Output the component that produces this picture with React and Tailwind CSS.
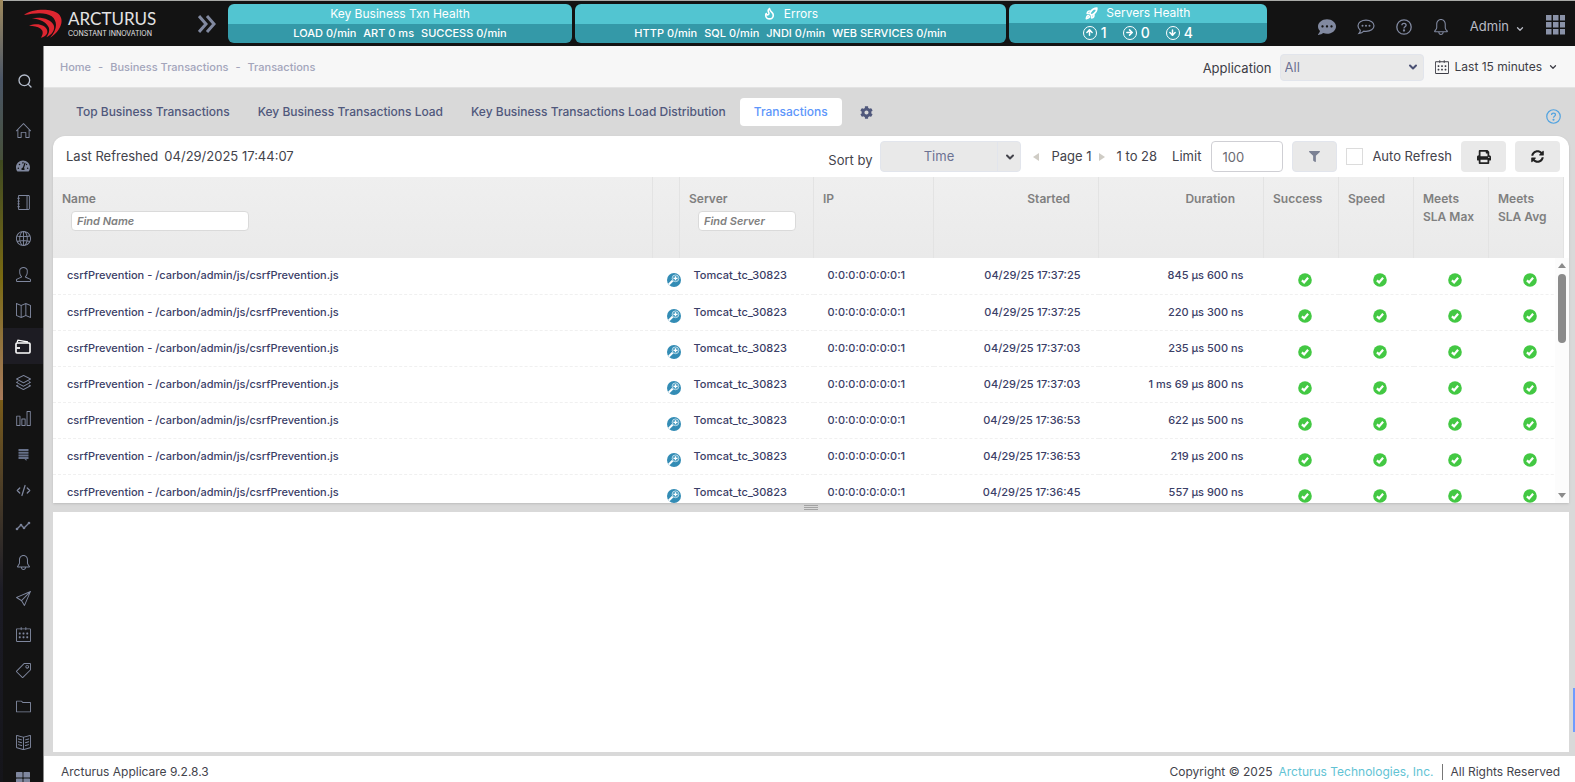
import React, { useState } from "react";
import {
  SlBell,
  SlBookOpen,
  SlCalender,
  SlChart,
  SlFolder,
  SlGlobe,
  SlHome,
  SlLayers,
  SlMap,
  SlNotebook,
  SlPaperPlane,
  SlTag,
  SlUser,
} from "react-icons/sl";
import {
  FaCog,
  FaCommentDots,
  FaFilter,
  FaPrint,
  FaSyncAlt,
  FaTachometerAlt,
  FaThLarge,
} from "react-icons/fa";
import {
  ArrowDown,
  ArrowRight,
  ArrowUp,
  ChevronDown,
  CodeXml,
  Flame,
  Rocket,
  Search,
} from "lucide-react";

const Swoosh = () => (
  <svg width="40" height="30" viewBox="66 24 120 90" fill="#dd2630">
    <path d="M69 42C90 24 150 20 172 38c20 18 8 52-25 72 23-24 23-50 5-64-18-14-52-10-83-4z" />
    <path d="M92 52c28-6 58 2 66 20 6 14-6 30-22 37 10-15 12-27 2-38-10-12-28-17-46-19z" />
    <path d="M84 74c26-10 48-2 54 12 4 12-4 20-18 24 7-12 7-20-1-27-10-7-21-9-35-9z" />
  </svg>
);

const WalletIcon = () => (
  <svg width="16" height="15" viewBox="0 0 16 15" fill="none" stroke="#fff">
    <rect x="1" y="4" width="14" height="10" rx="1" strokeWidth="1.600" />
    <path d="M2 3.500L3 1.200 13 3" strokeWidth="1.300" />
    <path d="M1.500 9H5" strokeWidth="1.800" />
  </svg>
);

const ServerIcon = () => (
  <svg width="13" height="13" viewBox="0 0 13 13" fill="#667089">
    <path d="M1.500 1h10v2h-10zM1.500 3.700h10v2h-10zM1.500 6.400h10v2h-10zM1.500 9.100h10v2H9.500V13l-2-1.900h-6z" />
  </svg>
);

const TrendIcon = () => (
  <svg width="16" height="12" viewBox="0 0 16 12" fill="none" stroke="#7a8299" strokeWidth="1.300">
    <path d="M2 9l4-4 3 3 5-5" />
    <g fill="#7a8299" stroke="none">
      <circle cx="2" cy="9" r="1.300" />
      <circle cx="6" cy="5" r="1.300" />
      <circle cx="9" cy="8" r="1.300" />
      <circle cx="14" cy="3" r="1.300" />
    </g>
  </svg>
);

const ChatOutline = () => (
  <svg width="18" height="16" viewBox="0 0 18 16" fill="none" stroke="currentColor" strokeWidth="1.200">
    <path d="M9 1.200c4.500 0 8 2.400 8 5.600s-3.500 5.600-8 5.600c-.8 0-1.500 0-2.200-.2C5.500 13.600 4 14.300 2 14.500c.8-.9 1.300-2 1.300-3.300C1.900 10.100 1 8.500 1 6.800c0-3.200 3.500-5.600 8-5.600z" />
    <g fill="currentColor" stroke="none">
      <circle cx="5.500" cy="6.800" r="1" />
      <circle cx="9" cy="6.800" r="1" />
      <circle cx="12.500" cy="6.800" r="1" />
    </g>
  </svg>
);

const HelpCircle = ({ size = 16 }) => (
  <svg width={size} height={size} viewBox="0 0 16 16" fill="none" stroke="currentColor" strokeWidth="1.300">
    <circle cx="8" cy="8" r="7.200" />
    <path d="M5.900 6.300c0-1.200.9-2 2.100-2s2.100.8 2.100 1.900c0 1.500-2.100 1.600-2.100 3.200" />
    <circle cx="8" cy="11.500" r=".5" fill="currentColor" />
  </svg>
);

const GridIcon = () => (
  <svg width="19" height="20" viewBox="0 0 19 20" fill="#8a92a8">
    {[0, 7, 14].map((y) => [0, 7, 14].map((x) => <rect key={`${x}-${y}`} x={x} y={y} width="5.500" height="5.500" />))}
  </svg>
);

const InspectIcon = () => (
  <svg width="14" height="14" viewBox="0 0 14 14">
    <circle cx="7" cy="7" r="7" fill="#338cb5" />
    <path d="M1.800 11.500l4-4" stroke="#fff" strokeWidth="2" />
    <circle cx="8.500" cy="5.300" r="3.400" fill="#4f9fc3" stroke="#cfe6f0" strokeWidth=".8" />
    <path d="M6.500 5.300h4M8.500 3.300v4" stroke="#fff" strokeWidth="1.200" />
  </svg>
);

const menu = [
  { name: "Home", icon: <SlHome size={15} /> },
  { name: "Dashboards", icon: <FaTachometerAlt size={14} /> },
  { name: "Notebook", icon: <SlNotebook size={15} /> },
  { name: "Web", icon: <SlGlobe size={15} /> },
  { name: "Users", icon: <SlUser size={15} /> },
  { name: "Map", icon: <SlMap size={15} /> },
  { name: "Business Transactions", icon: <WalletIcon />, active: true },
  { name: "Layers", icon: <SlLayers size={15} /> },
  { name: "Charts", icon: <SlChart size={15} /> },
  { name: "Servers", icon: <ServerIcon /> },
  { name: "Code", icon: <CodeXml size={15} strokeWidth={2} /> },
  { name: "Trends", icon: <TrendIcon /> },
  { name: "Alerts", icon: <SlBell size={15} /> },
  { name: "Messages", icon: <SlPaperPlane size={15} /> },
  { name: "Calendar", icon: <SlCalender size={15} /> },
  { name: "Tags", icon: <SlTag size={15} /> },
  { name: "Files", icon: <SlFolder size={15} /> },
  { name: "Documentation", icon: <SlBookOpen size={15} /> },
  { name: "Apps", icon: <FaThLarge size={14} /> },
];

const tabs = [
  "Top Business Transactions",
  "Key Business Transactions Load",
  "Key Business Transactions Load Distribution",
  "Transactions",
];

const rows = [
  { started: "04/29/25 17:37:25", duration: "845 μs 600 ns" },
  { started: "04/29/25 17:37:25", duration: "220 μs 300 ns" },
  { started: "04/29/25 17:37:03", duration: "235 μs 500 ns" },
  { started: "04/29/25 17:37:03", duration: "1 ms 69 μs 800 ns" },
  { started: "04/29/25 17:36:53", duration: "622 μs 500 ns" },
  { started: "04/29/25 17:36:53", duration: "219 μs 200 ns" },
  { started: "04/29/25 17:36:45", duration: "557 μs 900 ns" },
];

const HealthCard = ({ title, icon, className, children }) => (
  <section className={`flex h-[39px] min-w-0 flex-col overflow-hidden rounded-md text-white ${className}`}>
    <h2 className="flex h-5 items-center justify-center gap-2 bg-[#52c5d1] text-xs">
      {icon}
      {title}
    </h2>
    <div className="flex flex-1 items-center justify-center gap-[7px] whitespace-nowrap bg-[#3499a8] text-[11px] font-medium">
      {children}
    </div>
  </section>
);

const ServerCount = ({ icon, count }) => (
  <span className="flex items-center gap-1 text-sm">
    <span className="flex size-[14px] items-center justify-center rounded-full border border-white">{icon}</span>
    {count}
  </span>
);

const TopBar = () => (
  <header className="flex h-[46px] shrink-0 items-center border-t border-[#a9aaa7] bg-[#131313] text-[#8189a0]">
    <a href="#home" className="ml-5 flex w-[175px] items-center gap-[5px] text-[#e3e3e3]">
      <Swoosh />
      <span className="flex flex-col">
        <span className="font-[Lato,sans-serif] text-[17px] leading-5">ARCTURUS</span>
        <span className="text-[7px] leading-[10px]">CONSTANT INNOVATION</span>
      </span>
    </a>
    <button aria-label="Expand menu" className="mr-3">
      <svg width="18" height="18" viewBox="0 0 18 18" fill="none" stroke="currentColor" strokeWidth="3">
        <path d="M1 1l7 8-7 8M9 1l7 8-7 8" />
      </svg>
    </button>
    <div className="flex min-w-0 flex-1 gap-[3px] pb-px">
      <HealthCard title="Key Business Txn Health" className="grow-[344] basis-0">
        <span>LOAD 0/min</span>
        <span>ART 0 ms</span>
        <span>SUCCESS 0/min</span>
      </HealthCard>
      <HealthCard title="Errors" icon={<Flame size={13} strokeWidth={3} />} className="grow-[431] basis-0">
        <span>HTTP 0/min</span>
        <span>SQL 0/min</span>
        <span>JNDI 0/min</span>
        <span>WEB SERVICES 0/min</span>
      </HealthCard>
      <HealthCard title="Servers Health" icon={<Rocket size={13} strokeWidth={3} />} className="grow-[258] basis-0">
        <div className="flex gap-4">
          <ServerCount icon={<ArrowUp size={9} strokeWidth={4} />} count={1} />
          <ServerCount icon={<ArrowRight size={9} strokeWidth={4} />} count={0} />
          <ServerCount icon={<ArrowDown size={9} strokeWidth={4} />} count={4} />
        </div>
      </HealthCard>
    </div>
    <div className="ml-[51px] flex items-center gap-[21px] pt-[6px]">
      <button aria-label="Chat"><FaCommentDots size={18} /></button>
      <button aria-label="Feedback"><ChatOutline /></button>
      <button aria-label="Help"><HelpCircle /></button>
      <button aria-label="Notifications"><SlBell size={16} /></button>
      <button className="flex items-center gap-[6px] text-[13px] text-[#b9bcc6]">
        Admin
        <ChevronDown size={10} strokeWidth={3} className="mt-1" />
      </button>
      <button aria-label="Applications" className="mr-[10px] mb-1"><GridIcon /></button>
    </div>
  </header>
);

const Sidebar = () => (
  <nav className="flex w-10 shrink-0 flex-col overflow-hidden bg-[#131313] text-[#7f879e]">
    <button aria-label="Search" className="mt-[27px] mb-[23px] ml-[14px] text-[#b4bccb]">
      <Search size={16} />
    </button>
    {menu.map((item) => (
      <a
        key={item.name}
        href={`#${item.name}`}
        aria-label={item.name}
        className={`flex h-9 shrink-0 items-center justify-center ${item.active ? "bg-[#1d1c23] text-white" : ""}`}
      >
        {item.icon}
      </a>
    ))}
  </nav>
);

const SubHeader = () => (
  <div className="flex h-[42px] shrink-0 items-center border-b border-[#e3e3e3] bg-[#f7f7f7] pr-[17px] pl-4 text-xs text-[#3d3d46]">
    <nav aria-label="Breadcrumb" className="flex gap-[7px] pt-px text-[11px] font-medium text-[#a3a5bb]">
      <a href="#home">Home</a>
      <span>-</span>
      <a href="#business">Business Transactions</a>
      <span>-</span>
      <a href="#transactions">Transactions</a>
    </nav>
    <label htmlFor="application" className="mr-2 ml-auto pt-1 text-[13px]">Application</label>
    <div className="relative mr-[11px] pt-[2px]">
      <select
        id="application"
        className="h-[27px] w-36 appearance-none rounded border border-[#e2e5ec] bg-[#e9e9e9] px-1 text-[13px] text-[#6c7293]"
      >
        <option>All</option>
      </select>
      <ChevronDown size={12} strokeWidth={4} className="pointer-events-none absolute top-[9px] right-[5px] text-[#4a5073]" />
    </div>
    <button className="flex items-center gap-[6px]">
      <SlCalender size={14} />
      Last 15 minutes
      <ChevronDown size={10} strokeWidth={3} />
    </button>
  </div>
);

const Tabs = ({ active, onChange }) => (
  <div className="flex h-12 shrink-0 items-center pr-[14px] pl-[18px] text-[#50587c]">
    {tabs.map((tab) => (
      <button
        key={tab}
        onClick={() => onChange(tab)}
        className={`h-7 whitespace-nowrap rounded px-[14px] text-xs font-medium ${
          tab === active ? "bg-white text-[#5d96fb]" : ""
        }`}
      >
        {tab}
      </button>
    ))}
    <button aria-label="Settings" className="ml-[18px]"><FaCog size={13} /></button>
    <button aria-label="Page help" className="mt-2 ml-auto text-[#52a3e0]"><HelpCircle size={15} /></button>
  </div>
);

const Toolbar = () => (
  <div className="flex h-[41px] items-center pr-[9px] pl-[13px] text-[13px] text-[#43434b]">
    <span className="flex gap-[6px]">
      <span>Last Refreshed</span>
      <time>04/29/2025 17:44:07</time>
    </span>
    <label htmlFor="sort" className="mt-2 mr-2 ml-auto">Sort by</label>
    <div className="relative mr-3">
      <select
        id="sort"
        className="h-[31px] w-[141px] appearance-none rounded border border-[#e2e5ec] bg-[#e9e9e9] pr-6 text-center text-[#6c7293]"
      >
        <option>Time</option>
      </select>
      <span className="pointer-events-none absolute inset-y-px right-0 flex w-6 items-center justify-center border-l border-[#e2e5ec]">
        <ChevronDown size={12} strokeWidth={4} />
      </span>
    </div>
    <button aria-label="Previous page" className="h-0 w-0 border-y-4 border-r-[6px] border-y-transparent border-r-[#cfccc5]" />
    <span className="mr-[7px] ml-3">Page 1</span>
    <button aria-label="Next page" className="h-0 w-0 border-y-4 border-l-[6px] border-y-transparent border-l-[#cfccc5]" />
    <span className="ml-3">1 to 28</span>
    <label htmlFor="limit" className="mr-[10px] ml-[15px]">Limit</label>
    <input
      id="limit"
      defaultValue="100"
      className="mr-[9px] h-[31px] w-[72px] rounded border border-[#cfcfd4] bg-white px-[10px] text-[#6a6a72]"
    />
    <button aria-label="Filter" className="flex h-[31px] w-[45px] items-center justify-center rounded border border-[#e2e5ec] bg-[#e9e9e9] text-[#7b8194]">
      <FaFilter size={11} />
    </button>
    <input id="auto" type="checkbox" className="mr-[9px] ml-[9px] size-[17px] appearance-none border border-[#dcdcdc] bg-white" />
    <label htmlFor="auto" className="mr-[9px]">Auto Refresh</label>
    <button aria-label="Print" className="mr-[9px] flex h-[31px] w-[45px] items-center justify-center rounded bg-[#e9e9e9] text-[#222]">
      <FaPrint size={14} />
    </button>
    <button aria-label="Refresh" className="flex h-[31px] w-[45px] items-center justify-center rounded bg-[#e9e9e9] text-[#222]">
      <FaSyncAlt size={13} />
    </button>
  </div>
);

const HeadCell = ({ children, className = "" }) => (
  <th className={`border-r border-[#e3e3e3] px-[9px] pt-[13px] text-left align-top leading-[18px] font-semibold ${className}`}>
    {children}
  </th>
);

const FindInput = ({ label, className }) => (
  <input
    aria-label={label}
    placeholder={label}
    className={`mt-[3px] ml-[9px] block h-5 rounded border border-[#dadada] bg-white px-[5px] text-[11px] font-semibold italic placeholder:text-[#808080] ${className}`}
  />
);

const Check = () => (
  <td className="pt-2 pl-2">
    <svg width="14" height="14" viewBox="0 0 14 14" className="mx-auto" fill="none">
      <circle cx="7" cy="7" r="6.800" fill="#43c843" />
      <path d="M3.900 7.400l2.200 2 4-4.600" stroke="#fff" strokeWidth="2.200" />
    </svg>
  </td>
);

const TransactionTable = () => (
  <div className="relative h-[326px] overflow-hidden">
    <div className="mr-[5px]">
      <table className="w-full table-fixed border-collapse text-xs">
        <colgroup>
          <col />
          <col className="w-[27px]" />
          <col className="w-[134px]" />
          <col className="w-[120px]" />
          <col className="w-[165px]" />
          <col className="w-[165px]" />
          <col className="w-[75px]" />
          <col className="w-[75px]" />
          <col className="w-[75px]" />
          <col className="w-[75px]" />
        </colgroup>
        <thead>
          <tr className="h-[81px] bg-linear-to-b from-[#efefef] to-[#eaeaea] text-[#808080]">
            <HeadCell>
              Name
              <FindInput label="Find Name" className="w-[178px]" />
            </HeadCell>
            <HeadCell />
            <HeadCell>
              Server
              <FindInput label="Find Server" className="w-[98px]" />
            </HeadCell>
            <HeadCell>IP</HeadCell>
            <HeadCell className="pr-7 text-right">Started</HeadCell>
            <HeadCell className="pr-7 text-right">Duration</HeadCell>
            <HeadCell>Success</HeadCell>
            <HeadCell>Speed</HeadCell>
            <HeadCell>Meets SLA Max</HeadCell>
            <HeadCell>Meets SLA Avg</HeadCell>
          </tr>
        </thead>
        <tbody className="text-[11px] font-medium text-[#3b4067]">
          {rows.map((row, i) => (
            <tr key={i} className="h-9 border-b border-dashed border-[#f0f0f0] whitespace-nowrap">
              <td className="pl-[14px]">csrfPrevention - /carbon/admin/js/csrfPrevention.js</td>
              <td className="pt-2 pl-[14px]"><InspectIcon /></td>
              <td className="pl-[14px]">Tomcat_tc_30823</td>
              <td className="pl-[14px]">0:0:0:0:0:0:0:1</td>
              <td className="pr-[18px] text-right">{row.started}</td>
              <td className="pr-5 text-right">{row.duration}</td>
              <Check />
              <Check />
              <Check />
              <Check />
            </tr>
          ))}
        </tbody>
      </table>
    </div>
    {/* scrollbar */}
    <div className="absolute top-[81px] right-0 bottom-0 flex w-[14px] flex-col items-center bg-[#fcfcfc] py-[5px]">
      <span className="border-x-4 border-b-[5px] border-x-transparent border-b-[#8b8b8b]" />
      <span className="mt-[6px] h-[69px] w-2 rounded-full bg-[#8b8b8b]" />
      <span className="mt-auto border-x-4 border-t-[5px] border-x-transparent border-t-[#8b8b8b]" />
    </div>
  </div>
);

const Footer = () => (
  <footer className="flex h-[26px] shrink-0 items-center bg-white pt-[6px] pr-[15px] pl-[17px] text-xs text-[#43434b]">
    <span>Arcturus Applicare 9.2.8.3</span>
    <span className="ml-auto">Copyright © 2025</span>
    <a href="#arcturus" className="mr-2 ml-[6px] text-[#62c3d4]">Arcturus Technologies, Inc.</a>
    <span className="border-l border-[#777] pl-2">All Rights Reserved</span>
  </footer>
);

export default function App() {
  const [activeTab, setActiveTab] = useState("Transactions");

  return (
    <div className="relative flex h-screen overflow-hidden font-[Inter,sans-serif]">
      {/* sliver of the desktop behind the window */}
      <div className="flex w-[3px] shrink-0 flex-col">
        <div className="h-40 bg-linear-to-b from-[#a08a5c] via-[#4a5566] to-[#47503a]" />
        <div className="h-60 bg-linear-to-b from-[#3f4a20] via-[#7a6a10] to-[#a77a5a]" />
        <div className="flex-1 bg-linear-to-b from-[#7a5c18] via-[#1c1c26] to-[#15151a]" />
      </div>
      <div className="flex min-w-0 flex-1 flex-col">
        <TopBar />
        <div className="flex min-h-0 flex-1">
          <Sidebar />
          <div className="flex min-w-0 flex-1 flex-col border-l border-[#8b8b8b] bg-[#d9d9d9]">
            <SubHeader />
            <Tabs active={activeTab} onChange={setActiveTab} />
            <main className="flex min-h-0 flex-1 flex-col pr-[6px] pl-[9px]">
              <section className="shrink-0 overflow-hidden rounded-t-xl bg-white shadow">
                <Toolbar />
                <TransactionTable />
              </section>
              <div className="flex h-[9px] shrink-0 flex-col items-center justify-center gap-px">
                <span className="h-px w-[14px] bg-[#a3a3a3]" />
                <span className="h-px w-[14px] bg-[#a3a3a3]" />
                <span className="h-px w-[14px] bg-[#a3a3a3]" />
              </div>
              <section className="mb-1 flex-1 bg-white" />
            </main>
            <Footer />
          </div>
        </div>
      </div>
      <div className="absolute top-[688px] right-0 h-11 w-[2px] bg-[#6f9bff]" />
    </div>
  );
}
